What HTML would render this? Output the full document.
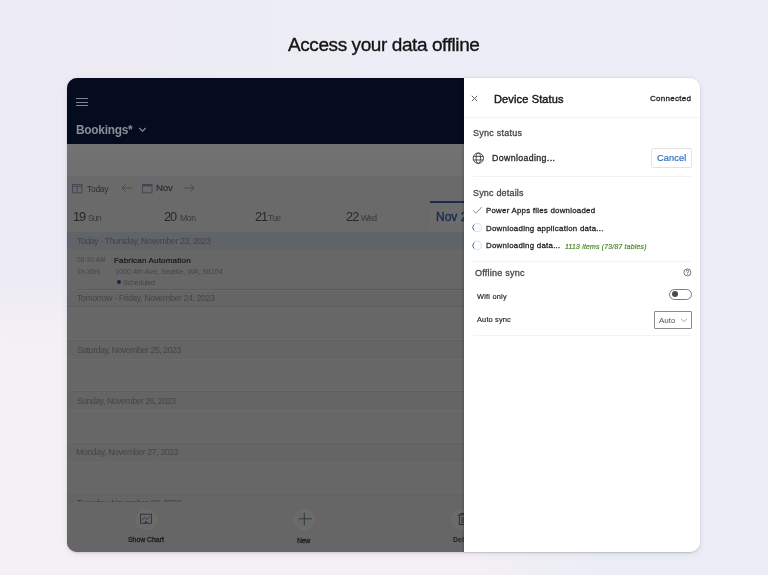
<!DOCTYPE html>
<html><head><meta charset="utf-8">
<style>
*{margin:0;padding:0;box-sizing:border-box}
html,body{width:768px;height:575px;overflow:hidden}
body{font-family:"Liberation Sans",sans-serif;position:relative;background:#eeeef6}
.t{position:absolute;white-space:nowrap;line-height:1;will-change:transform}
.r{position:absolute}
</style></head><body>
<div class="r" style="left:0;top:0;width:768px;height:575px;background:linear-gradient(90deg,#ecebf4 0%,#ecedf6 50%,#ebeef7 100%)"></div>
<div class="r" style="left:0;top:0;width:768px;height:575px;background:radial-gradient(ellipse 600px 300px at 0% 100%,rgba(245,240,244,1) 0%,rgba(245,240,244,1) 76%,rgba(245,240,244,0) 100%)"></div>
<div class="t" style="left:288.4px;top:34.55px;font-size:18.99px;color:#141414;letter-spacing:-0.407px;-webkit-text-stroke:0.35px #141414">Access your data offline</div>
<div class="r" style="left:67px;top:78px;width:633px;height:474px;border-radius:10px;box-shadow:0 1px 2px rgba(30,30,60,0.14),0 2px 7px rgba(30,30,60,0.07)"></div>
<div class="r" style="left:67px;top:78px;width:401px;height:474px;border-radius:10px 0 0 10px;overflow:hidden;background:#6a6a6a"><div class="r" style="left:-67px;top:-78px;width:768px;height:575px">
<div class="r" style="left:67px;top:78px;width:401px;height:66px;background:#050c1f"></div>
<div class="r" style="left:76px;top:98px;width:12px;height:1.1px;background:#7f848e"></div>
<div class="r" style="left:76px;top:101.5px;width:12px;height:1.1px;background:#7f848e"></div>
<div class="r" style="left:76px;top:105px;width:12px;height:1.1px;background:#7f848e"></div>
<svg class="r" style="left:138px;top:126px" width="9" height="7" viewBox="0 0 9 7"><path d="M1.3 2 L4.5 5.2 L7.7 2" fill="none" stroke="#8b8f98" stroke-width="1.1"/></svg>
<div class="r" style="left:67px;top:144px;width:401px;height:32px;background:linear-gradient(#727272,#6f6f6f)"></div>
<div class="r" style="left:67px;top:176px;width:401px;height:1px;background:#6c6c6c"></div>
<div class="r" style="left:429.6px;top:201px;width:40px;height:30px;background:#6c6c6c;border-top:2px solid #1b2c50"></div>
<div class="r" style="left:67px;top:232px;width:401px;height:17px;background:#606367"></div>
<div class="r" style="left:67px;top:249px;width:401px;height:253px;background:#676767"></div>
<div class="r" style="left:77px;top:289px;width:391px;height:1px;background:#5b5b5b"></div>
<div class="r" style="left:77px;top:290px;width:391px;height:1px;background:#6b6b6b"></div>
<div class="r" style="left:67px;top:291px;width:401px;height:15px;background:#656565"></div>
<div class="r" style="left:67px;top:306px;width:401px;height:1px;background:#5b5b5b"></div>
<div class="r" style="left:67px;top:307px;width:401px;height:1px;background:#6b6b6b"></div>
<div class="r" style="left:67px;top:339px;width:401px;height:1px;background:#6a6a6a"></div>
<div class="r" style="left:67px;top:340px;width:401px;height:19px;background:#656565;border-top:1px solid #616161"></div>
<div class="r" style="left:67px;top:359px;width:401px;height:1px;background:#6a6a6a"></div>
<div class="r" style="left:67px;top:390px;width:401px;height:1px;background:#6a6a6a"></div>
<div class="r" style="left:67px;top:391px;width:401px;height:19px;background:#656565;border-top:1px solid #616161"></div>
<div class="r" style="left:67px;top:410px;width:401px;height:1px;background:#6a6a6a"></div>
<div class="r" style="left:67px;top:442px;width:401px;height:1px;background:#6a6a6a"></div>
<div class="r" style="left:67px;top:443px;width:401px;height:19px;background:#656565;border-top:1px solid #616161"></div>
<div class="r" style="left:67px;top:462px;width:401px;height:1px;background:#6a6a6a"></div>
<div class="r" style="left:67px;top:493px;width:401px;height:1px;background:#6a6a6a"></div>
<div class="r" style="left:67px;top:494px;width:401px;height:19px;background:#656565;border-top:1px solid #616161"></div>
<div class="r" style="left:67px;top:513px;width:401px;height:1px;background:#6a6a6a"></div>
<div class="t" style="left:76.1px;top:124.65px;font-size:11.88px;color:#8b8f98;letter-spacing:-0.25px;font-weight:bold">Bookings*</div>
<div class="t" style="left:86.8px;top:184.55px;font-size:8.41px;color:#2f2f2f;letter-spacing:-0.25px">Today</div>
<div class="t" style="left:156.0px;top:182.6px;font-size:9.6px;color:#2a2a2a;letter-spacing:-0.075px;-webkit-text-stroke:0.12px #2a2a2a">Nov</div>
<div class="t" style="left:73.4px;top:210.6px;font-size:12.75px;color:#282828;letter-spacing:-1.2px">19</div>
<div class="t" style="left:87.6px;top:213.65px;font-size:8.7px;color:#393939;letter-spacing:-1px">Sun</div>
<div class="t" style="left:164.4px;top:210.6px;font-size:12.75px;color:#282828;letter-spacing:-1.2px">20</div>
<div class="t" style="left:179.8px;top:213.65px;font-size:8.7px;color:#393939;letter-spacing:-0.4px">Mon</div>
<div class="t" style="left:254.5px;top:210.6px;font-size:12.75px;color:#282828;letter-spacing:-1.2px">21</div>
<div class="t" style="left:268.4px;top:213.65px;font-size:8.7px;color:#393939;letter-spacing:-0.8px">Tue</div>
<div class="t" style="left:345.6px;top:210.6px;font-size:12.75px;color:#282828;letter-spacing:-0.75px">22</div>
<div class="t" style="left:361.0px;top:213.65px;font-size:8.7px;color:#393939;letter-spacing:-0.825px">Wed</div>
<div class="t" style="left:76.7px;top:236.75px;font-size:8.7px;color:#434446;letter-spacing:-0.393px">Today - Thursday, November 23, 2023</div>
<div class="t" style="left:76.8px;top:256.55px;font-size:6.38px;color:#464646;letter-spacing:0.25px">08:30 AM</div>
<div class="t" style="left:76.5px;top:268.6px;font-size:7.1px;color:#464646;letter-spacing:-0.05px">1h 30m</div>
<div class="t" style="left:114.1px;top:256.7px;font-size:8.1px;color:#161616;letter-spacing:0.136px;-webkit-text-stroke:0.2px #161616">Fabrican Automation</div>
<div class="t" style="left:114.5px;top:267.6px;font-size:7.39px;color:#464646;letter-spacing:-0.081px">1000 4th Ave, Seattle, WA, 98104</div>
<div class="t" style="left:122.9px;top:279.55px;font-size:7.1px;color:#464646;letter-spacing:-0.188px">Scheduled</div>
<div class="t" style="left:76.8px;top:293.55px;font-size:8.7px;color:#464646;letter-spacing:-0.364px">Tomorrow - Friday, November 24, 2023</div>
<div class="t" style="left:76.5px;top:345.5px;font-size:8.99px;color:#464646;letter-spacing:-0.575px">Saturday, November 25, 2023</div>
<div class="t" style="left:76.5px;top:396.5px;font-size:8.7px;color:#464646;letter-spacing:-0.458px">Sunday, November 26, 2023</div>
<div class="t" style="left:76.2px;top:447.6px;font-size:8.7px;color:#464646;letter-spacing:-0.365px">Monday, November 27, 2023</div>
<div class="t" style="left:436.3px;top:210.6px;font-size:12px;color:#1c2e52;letter-spacing:0px;-webkit-text-stroke:0.45px #1c2e52">Nov 23</div>
<div class="t" style="left:76.5px;top:499px;font-size:8.7px;color:#3e3e3e;letter-spacing:-0.36px">Tuesday, November 28, 2023</div>
<svg class="r" style="left:71px;top:183px" width="12" height="11" viewBox="0 0 12 11"><rect x="1.5" y="1.5" width="9.5" height="8.3" fill="none" stroke="#3f4459" stroke-width="0.9"/><path d="M1.5 3.3 H11 M5.2 4.8 L6.3 4.3 V8.6" fill="none" stroke="#3f4459" stroke-width="0.9"/></svg>
<svg class="r" style="left:120px;top:183px" width="14" height="10" viewBox="0 0 14 10"><path d="M12.5 5 H2 M5.5 1.5 L2 5 L5.5 8.5" fill="none" stroke="#4a4a4a" stroke-width="1"/></svg>
<svg class="r" style="left:141px;top:183px" width="12" height="11" viewBox="0 0 12 11"><rect x="1.5" y="1.5" width="9.5" height="8.3" fill="none" stroke="#3f4459" stroke-width="0.9"/><rect x="1.5" y="1.5" width="9.5" height="1.8" fill="#3f4459"/></svg>
<svg class="r" style="left:182px;top:183px" width="14" height="10" viewBox="0 0 14 10"><path d="M1.5 5 H12 M8.5 1.5 L12 5 L8.5 8.5" fill="none" stroke="#4a4a4a" stroke-width="1"/></svg>
<div class="r" style="left:117.3px;top:280.2px;width:4px;height:4px;border-radius:50%;background:#1c1f4d"></div>
<div class="r" style="left:67px;top:502px;width:401px;height:50px;background:#666666"></div>
<div class="r" style="left:135.5px;top:508.6px;width:21px;height:21px;border-radius:50%;background:#6a6a6a;border:1px solid #707070"></div>
<div class="r" style="left:293.9px;top:508.6px;width:21px;height:21px;border-radius:50%;background:#6a6a6a;border:1px solid #707070"></div>
<div class="r" style="left:451.5px;top:508.6px;width:21px;height:21px;border-radius:50%;background:#6a6a6a;border:1px solid #707070"></div>
<svg class="r" style="left:139px;top:512px" width="14" height="13" viewBox="0 0 14 13"><rect x="1.5" y="2.2" width="11" height="9" fill="none" stroke="#303030" stroke-width="0.9"/><path d="M3 8.5 L5.5 5.2 L8 7.6 L11 4.3" fill="none" stroke="#303030" stroke-width="0.8"/><circle cx="7" cy="10.3" r="1.3" fill="#2f3470"/></svg>
<svg class="r" style="left:298px;top:512px" width="14" height="14" viewBox="0 0 14 14"><path d="M6.3 0.8 V13 M0.9 6.8 H13.9" fill="none" stroke="#2f3d36" stroke-width="1"/></svg>
<svg class="r" style="left:457px;top:512px" width="12" height="14" viewBox="0 0 12 14"><path d="M1 3 H11 M4 3 V1.5 H8 V3 M2.3 3 V12.5 H9.7 V3 M5 5 V11 M7 5 V11" fill="none" stroke="#2a2a2a" stroke-width="1"/></svg>
<div class="t" style="left:128.0px;top:536.6px;font-size:6.96px;color:#1e1e1e;letter-spacing:-0.05px;-webkit-text-stroke:0.3px #1e1e1e">Show Chart</div>
<div class="t" style="left:297.4px;top:536.65px;font-size:7px;color:#1e1e1e;letter-spacing:-0.3px;-webkit-text-stroke:0.3px #1e1e1e">New</div>
<div class="t" style="left:453px;top:536.6px;font-size:6.96px;color:#1e1e1e;font-weight:bold">Delete</div>
</div></div>
<div class="r" style="left:464px;top:78px;width:236px;height:474px;background:#fff;border-radius:0 10px 10px 0;box-shadow:-1px 0 2px rgba(0,0,0,0.18)"></div>
<svg class="r" style="left:470px;top:94px" width="9" height="9" viewBox="0 0 9 9"><path d="M1.8 1.8 L7.2 7.2 M7.2 1.8 L1.8 7.2" stroke="#555" stroke-width="0.9"/></svg>
<div class="r" style="left:464px;top:116.6px;width:236px;height:1px;background:#f4f4f4"></div>
<div class="r" style="left:473px;top:176.2px;width:218px;height:1px;background:#f2f2f2"></div>
<div class="r" style="left:473px;top:261px;width:218px;height:1px;background:#f2f2f2"></div>
<div class="r" style="left:473px;top:334.5px;width:218px;height:1px;background:#f3f3f3"></div>
<svg class="r" style="left:472px;top:152px" width="13" height="13" viewBox="0 0 13 13"><g fill="none" stroke="#3a3a3a" stroke-width="0.9"><circle cx="6.3" cy="6.2" r="5.2"/><ellipse cx="6.3" cy="6.2" rx="2.2" ry="5.2"/><path d="M1.3 4.4 H11.3 M1.3 8 H11.3"/></g></svg>
<div class="r" style="left:651.4px;top:148.2px;width:40.3px;height:19.5px;border:1px solid #e3e3e3;border-radius:1.5px"></div>
<svg class="r" style="left:472px;top:206px" width="11" height="9" viewBox="0 0 11 9"><path d="M1 4.3 L3.8 7.1 L9.8 1" fill="none" stroke="#76865a" stroke-width="0.9"/></svg>
<svg class="r" style="left:472px;top:222.2px" width="11" height="11" viewBox="0 0 11 11"><circle cx="5.2" cy="5.5" r="4.3" fill="none" stroke="#d3d9e0" stroke-width="0.9"/><path d="M2.1 8.5 A4.3 4.3 0 0 1 2.1 2.5" fill="none" stroke="#3f78b8" stroke-width="1"/></svg>
<svg class="r" style="left:472px;top:239.6px" width="11" height="11" viewBox="0 0 11 11"><circle cx="5.2" cy="5.5" r="4.3" fill="none" stroke="#d3d9e0" stroke-width="0.9"/><path d="M2.1 8.5 A4.3 4.3 0 0 1 2.1 2.5" fill="none" stroke="#3f78b8" stroke-width="1"/></svg>
<svg class="r" style="left:683.3px;top:268.2px" width="9" height="9" viewBox="0 0 9 9"><circle cx="4.4" cy="4.4" r="3.5" fill="none" stroke="#555" stroke-width="0.8"/><path d="M3.2 3.5 A1.2 1.2 0 1 1 4.4 4.7 V5.4" fill="none" stroke="#555" stroke-width="0.8"/><circle cx="4.4" cy="6.5" r="0.45" fill="#555"/></svg>
<div class="r" style="left:669.3px;top:288.6px;width:22.6px;height:11.2px;border:1px solid #7c7c7c;border-radius:6px"></div>
<div class="r" style="left:672px;top:291px;width:6px;height:6px;border-radius:50%;background:#4a4a4a"></div>
<div class="r" style="left:654.3px;top:311.2px;width:37.6px;height:17.6px;border:1px solid #8a8a8a;border-radius:1px"></div>
<svg class="r" style="left:680px;top:316.7px" width="8" height="6" viewBox="0 0 8 6"><path d="M1 1.8 L4 4.6 L7 1.8" fill="none" stroke="#9a9a9a" stroke-width="0.9"/></svg>
<div class="t" style="left:493.9px;top:93.7px;font-size:11px;color:#1a1a1a;letter-spacing:0.142px;-webkit-text-stroke:0.45px #1a1a1a">Device Status</div>
<div class="t" style="left:649.6px;top:94.65px;font-size:8px;color:#1f1f1f;letter-spacing:0.275px;-webkit-text-stroke:0.3px #1f1f1f">Connected</div>
<div class="t" style="left:473.2px;top:128.65px;font-size:9px;color:#474747;letter-spacing:0.24px;-webkit-text-stroke:0.3px #474747">Sync status</div>
<div class="t" style="left:491.6px;top:153.7px;font-size:8.8px;color:#2a2a2a;letter-spacing:0.362px;-webkit-text-stroke:0.3px #2a2a2a">Downloading...</div>
<div class="t" style="left:657.2px;top:153.52px;font-size:9.2px;color:#2f6fc2;letter-spacing:0.15px;-webkit-text-stroke:0.2px #2f6fc2">Cancel</div>
<div class="t" style="left:473.2px;top:188.65px;font-size:9px;color:#474747;letter-spacing:0.182px;-webkit-text-stroke:0.3px #474747">Sync details</div>
<div class="t" style="left:486.2px;top:206.6px;font-size:7.9px;color:#1f1f1f;letter-spacing:0.231px;-webkit-text-stroke:0.28px #1f1f1f">Power Apps files downloaded</div>
<div class="t" style="left:486.2px;top:224.55px;font-size:7.9px;color:#1f1f1f;letter-spacing:0.257px;-webkit-text-stroke:0.28px #1f1f1f">Downloading application data...</div>
<div class="t" style="left:486.2px;top:241.72px;font-size:7.9px;color:#1f1f1f;letter-spacing:0.25px;-webkit-text-stroke:0.28px #1f1f1f">Downloading data...</div>
<div class="t" style="left:564.8px;top:243.55px;font-size:6.8px;color:#4d8628;letter-spacing:0.238px;-webkit-text-stroke:0.2px #4d8628;font-style:italic">1113 items (73/87 tables)</div>
<div class="t" style="left:474.6px;top:268.5px;font-size:9.1px;color:#474747;letter-spacing:0.209px;-webkit-text-stroke:0.3px #474747">Offline sync</div>
<div class="t" style="left:477.3px;top:292.65px;font-size:7.4px;color:#262626;letter-spacing:0.212px;-webkit-text-stroke:0.18px #262626">Wifi only</div>
<div class="t" style="left:477.3px;top:316.0px;font-size:7.4px;color:#262626;letter-spacing:0.169px;-webkit-text-stroke:0.18px #262626">Auto sync</div>
<div class="t" style="left:659.2px;top:316.6px;font-size:8px;color:#555555;letter-spacing:-0.017px">Auto</div>
</body></html>
